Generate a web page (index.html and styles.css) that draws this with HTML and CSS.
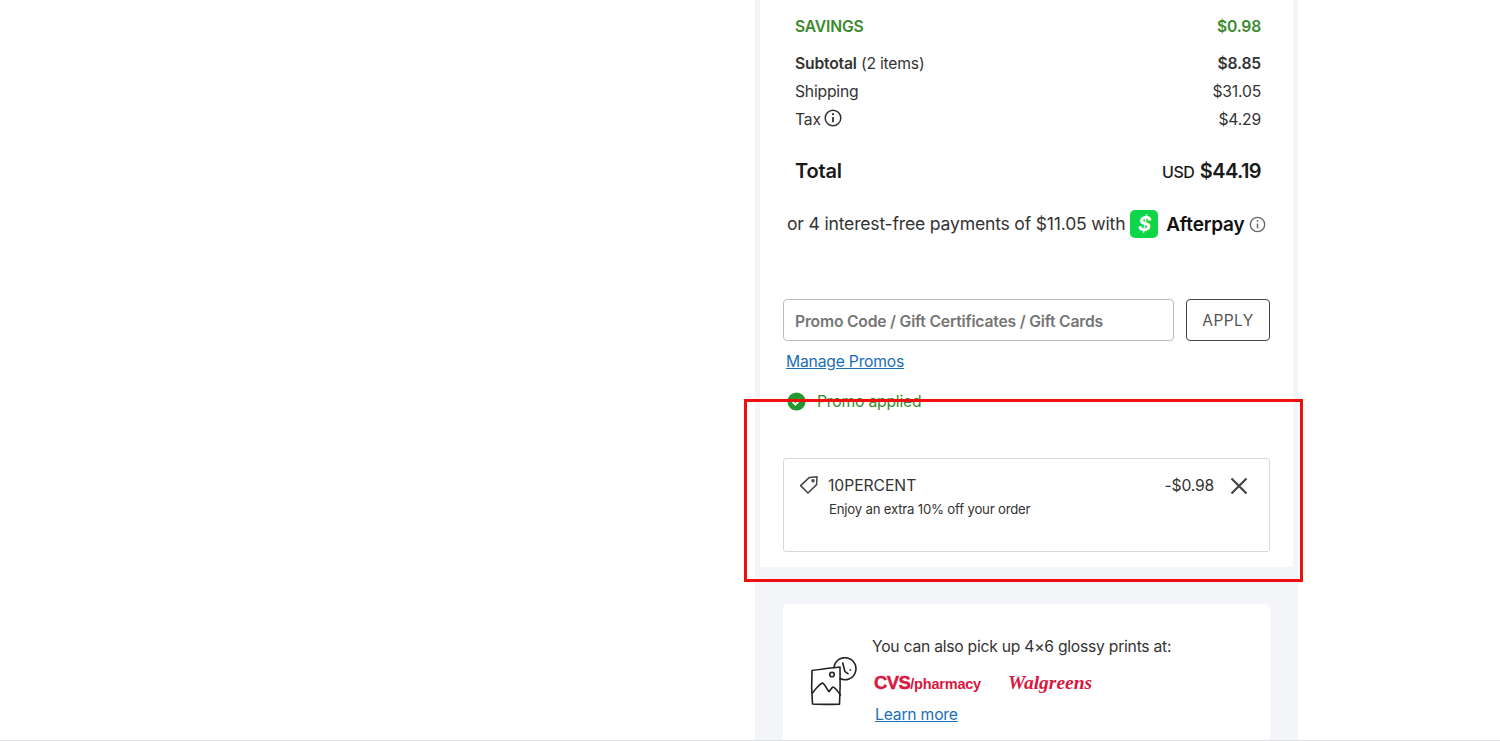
FILE: index.html
```html
<!DOCTYPE html>
<html lang="en">
<head>
    <meta charset="UTF-8">
    <title>Order summary</title>
    <link rel="stylesheet" href="styles.css">
</head>
<body>
    <div class="columna">
        <section class="resumen">
            <div class="fila ahorro"><span>SAVINGS</span><span>$0.98</span></div>
            <div class="fila subtotal"><span><b>Subtotal</b> (2 items)</span><b>$8.85</b></div>
            <div class="fila"><span>Shipping</span><span>$31.05</span></div>
            <div class="fila">
                <span class="tax">Tax
                    <svg class="info" viewBox="0 0 18 18" fill="none" stroke="#333" stroke-width="1.5"><circle cx="9" cy="9" r="7.8"/><path d="M9 8v5.2" stroke-width="1.8"/><circle cx="9" cy="5.2" r="1.1" fill="#333" stroke="none"/></svg>
                </span>
                <span>$4.29</span>
            </div>
            <div class="fila total"><b>Total</b><span><small>USD</small> <b class="monto">$44.19</b></span></div>
            <div class="afterpay">
                <span class="cuotas">or 4 interest-free payments of $11.05 with</span>
                <span class="cashapp">$</span>
                <b class="marca">Afterpay</b>
                <svg class="info-gris" viewBox="0 0 18 18" fill="none" stroke="#666" stroke-width="1.4"><circle cx="9" cy="9" r="7.6"/><path d="M9 8v5" stroke-width="1.6"/><circle cx="9" cy="5.2" r="1" fill="#666" stroke="none"/></svg>
            </div>

            <div class="promo-form">
                <div class="campo">Promo Code / Gift Certificates / Gift Cards</div>
                <button class="aplicar">APPLY</button>
            </div>
            <a class="enlace manage" href="#">Manage Promos</a>
            <div class="aplicado">
                <svg class="check" viewBox="0 0 20 20"><circle cx="10" cy="10" r="9.5" fill="#22992f"/><path d="M5.8 10.2l3 3 5.4-5.600" fill="none" stroke="#fff" stroke-width="2"/></svg>
                <span>Promo applied</span>
            </div>

            <div class="cupon">
                <svg class="etiqueta" viewBox="0 0 20 20" fill="none" stroke="#444" stroke-width="1.5" stroke-linejoin="round"><path d="M1.6 10.6L10.4 2.4l7.6-.6-.4 7.8-8.600 8.400z"/><circle cx="14" cy="5.8" r="1"/></svg>
                <div class="cupon-texto">
                    <div class="codigo">10PERCENT</div>
                    <div class="detalle">Enjoy an extra 10% off your order</div>
                </div>
                <span class="descuento">-$0.98</span>
                <svg class="cerrar" viewBox="0 0 18 18" stroke="#444" stroke-width="2.2"><path d="M1.5 1.5l15 15M16.5 1.5l-15 15"/></svg>
            </div>
        </section>

        <section class="recogida">
            <svg class="fotos" viewBox="0 0 47 50" fill="none" stroke="#222" stroke-width="1.6" stroke-linecap="round" stroke-linejoin="round">
                <path d="M30 10C21 11 11 12 2 13.500c-.5 10-.5 22 .5 33.500 8 .6 18 .3 27 .3.6-11 .8-25 .5-37.300z"/>
                <circle cx="22" cy="17.500" r="2.300"/>
                <path d="M2.500 36c3-4 7-9 10-10 3 1.500 4.500 7 6.500 8.700 1.500-1.500 2.500-4 4-4.700 3 1 5 5 7.500 8"/>
                <path d="M30 21.500a11 11 0 1 0 -6-11"/>
                <path d="M32.700 6l2.300 8.700 3 2M40 13h.500"/>
            </svg>
            <div class="recogida-texto">
                <p>You can also pick up 4×6 glossy prints at:</p>
                <div class="logos">
                    <span class="cvs"><b>CVS</b>/pharmacy</span>
                    <span class="walgreens">Walgreens</span>
                </div>
                <a class="enlace" href="#">Learn more</a>
            </div>
        </section>
    </div>

    <div class="marco-rojo"></div>
</body>
</html>
```

FILE: styles.css
```css
body {
    font-family: Inter, Arial, sans-serif;
    font-size: 15.7px;
    letter-spacing: -0.2px;
    color: #333;
    margin: 0;
    height: 741px;
    overflow: hidden;
    background-color: #fff;
    position: relative;
}

body::after {
    content: "";
    position: absolute;
    left: 0;
    right: 0;
    bottom: 0;
    height: 1px;
    background-color: #dcdde2;
}

.columna {
    width: 543px;
    height: 741px;
    margin-left: 755px;
    padding: 0 5px;
    box-sizing: border-box;
    background-color: #f4f5f8;
}

.resumen {
    height: 567px;
    padding: 14px 23px 0;
    box-sizing: border-box;
    background-color: #fff;
}

.fila {
    display: flex;
    justify-content: space-between;
    align-items: center;
    height: 28px;
    padding: 0 9px 0 12px;
}

.ahorro {
    height: 24px;
    margin-bottom: 11px;
    font-weight: 600;
    color: #3b8a2d;
}

.subtotal b,
.fila > b {
    font-weight: 600;
}

.tax {
    display: flex;
    align-items: center;
    gap: 3px;
}

.info {
    width: 18px;
    height: 18px;
    margin-top: -3px;
}

.total {
    height: 36px;
    margin-top: 20px;
    font-size: 20px;
    color: #1a1a1a;
}

.total b {
    font-weight: 600;
}

.total small {
    font-size: 16px;
    font-weight: 500;
    letter-spacing: -0.5px;
}

.monto {
    letter-spacing: -0.6px;
}

.afterpay {
    display: flex;
    align-items: center;
    height: 30px;
    margin-top: 20px;
    margin-left: 4px;
    font-size: 17.6px;
    white-space: nowrap;
}

.cuotas {
    margin-top: -2px;
}

.cashapp {
    display: flex;
    align-items: center;
    justify-content: center;
    width: 28px;
    height: 28px;
    margin-left: 5px;
    border-radius: 5px;
    background-color: #0fd548;
    color: #fff;
    font-weight: 700;
    font-size: 20px;
    font-style: italic;
}

.marca {
    margin-left: 8px;
    font-size: 19px;
    font-weight: 600;
    color: #111;
}

.info-gris {
    width: 17px;
    height: 17px;
    margin-left: 5px;
}

.promo-form {
    display: flex;
    gap: 12px;
    margin-top: 60px;
}

.campo {
    flex: 1;
    height: 42px;
    line-height: 43px;
    padding-left: 11px;
    box-sizing: border-box;
    border: 1px solid #bbb;
    border-radius: 4px;
    font-weight: 600;
    color: #757575;
}

.aplicar {
    width: 84px;
    height: 42px;
    border: 1px solid #444;
    border-radius: 4px;
    background-color: #fff;
    color: #555;
    font-family: inherit;
    font-size: 15.5px;
    letter-spacing: 0.4px;
    padding: 0;
}

.enlace {
    color: #1a6fb5;
    text-decoration: underline;
}

.manage {
    display: block;
    margin: 11px 0 0 3px;
    line-height: 19px;
}

.aplicado {
    display: flex;
    align-items: center;
    gap: 11px;
    margin: 20px 0 0 4px;
    height: 20px;
    color: #3b8a2d;
}

.check {
    width: 19px;
    height: 19px;
}

.cupon {
    display: flex;
    align-items: flex-start;
    height: 94px;
    margin-top: 47px;
    padding: 16px 21px 0 15px;
    box-sizing: border-box;
    border: 1px solid #d8d8dc;
    border-radius: 3px;
    color: #333;
}

.etiqueta {
    width: 20px;
    height: 20px;
    margin-right: 9px;
}

.cupon-texto {
    flex: 1;
}

.codigo {
    line-height: 22px;
    letter-spacing: -0.05px;
}

.detalle {
    margin-top: 3px;
    font-size: 13.2px;
    line-height: 18px;
    padding-left: 1px;
}

.descuento {
    line-height: 22px;
}

.cerrar {
    width: 18px;
    height: 18px;
    margin: 2px 0 0 16px;
}

.recogida {
    display: flex;
    align-items: center;
    gap: 15px;
    height: 150px;
    margin: 37px 23px 0;
    padding: 2px 0 0 27px;
    box-sizing: border-box;
    border-radius: 5px;
    background-color: #fff;
}

.fotos {
    width: 47px;
    height: 50px;
    margin-top: 4px;
}

.recogida-texto p {
    margin: 0;
    line-height: 20px;
    letter-spacing: -0.25px;
}

.logos {
    display: flex;
    align-items: center;
    gap: 27px;
    height: 26px;
    margin: 13px 0 9px 2px;
    color: #d9173f;
}

.cvs {
    font-family: "Liberation Sans", Arial, sans-serif;
    font-size: 14.5px;
    font-weight: 700;
    letter-spacing: -0.2px;
}

.cvs b {
    font-size: 18.5px;
    font-weight: 700;
    letter-spacing: -0.6px;
    -webkit-text-stroke: 0.4px #d9173f;
}

.walgreens {
    font-family: "Liberation Serif", serif;
    font-size: 19.5px;
    font-style: italic;
    font-weight: 700;
    letter-spacing: 0;
}

.recogida .enlace {
    margin-left: 3px;
}

/* Marco sobre el contenido */
.marco-rojo {
    position: absolute;
    left: 744px;
    top: 399px;
    width: 553px;
    height: 177px;
    border: 3px solid #f00f0f;
}
```
